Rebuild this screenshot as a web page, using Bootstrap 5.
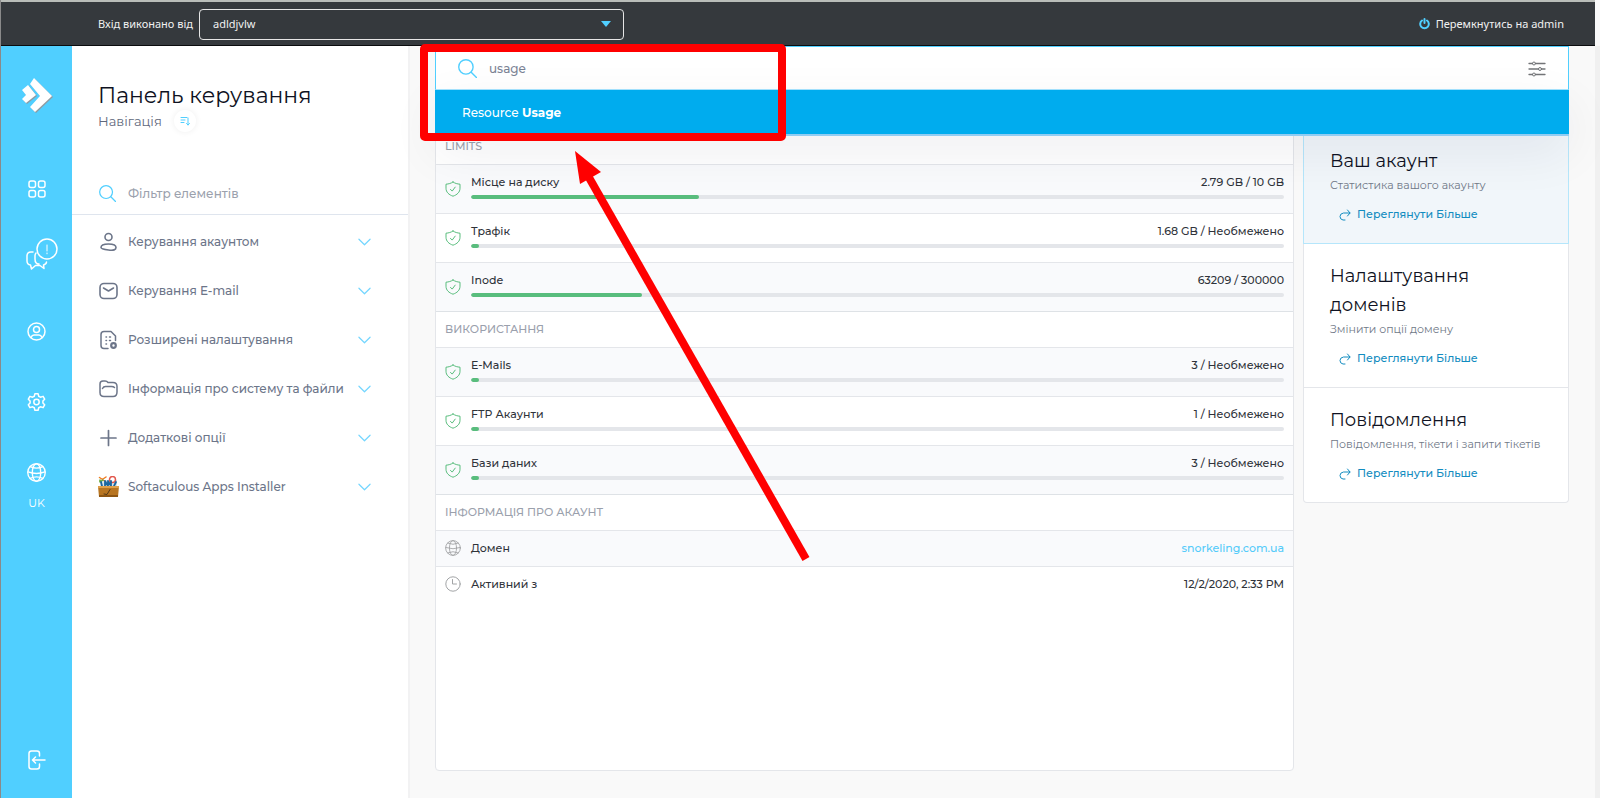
<!DOCTYPE html>
<html lang="uk">
<head>
<meta charset="utf-8">
<meta name="viewport" content="width=device-width, initial-scale=1">
<title>Панель керування</title>
<link href="https://cdn.jsdelivr.net/npm/bootstrap@5.3.0/dist/css/bootstrap.min.css" rel="stylesheet">
<style>
  :root { --sky: #50cfff; --slate: #6c7589; --ink: #0f1222; --line: #e4e6ea; }
  body { font-family: Montserrat, Inter, sans-serif; font-size: 11px; line-height: 18px; color: #2f333a; background: #f9f9f9; }
  svg { fill: none; stroke: currentColor; stroke-linecap: round; stroke-linejoin: round; flex: none; }
  svg.solid { stroke: none; }
  a { text-decoration: none; }
  .shell { border-left: 1px solid #8a8a8a; }
  .topbar { height: 46px; margin-right: 5px; padding: 1px 31px 0 97px; background: #35393d; border-top: 2px solid #b9bdb9; border-bottom: 1px solid #0b0c0e; color: #fff; font-family: "Noto Sans", sans-serif; }
  .topbar label, .topbar select, .topbar a { font-size: 11px; color: #f1f1f1; }
  .topbar label { margin-right: 6px; }
  .topbar a { gap: 6px; }
  .topbar a svg { color: var(--sky); }
  .user-pick { width: 425px; }
  .user-pick select { height: 31px; padding: 0 13px; background: #35393d; border: 1px solid #e6e6e6; border-radius: 4px; appearance: none; }
  .user-pick .caret { position: absolute; right: 13px; top: 12px; border: 5px solid transparent; border-top: 6px solid var(--sky); border-bottom: 0; pointer-events: none; }
  .rail { width: 71px; background: var(--sky); padding: 32px 0 28px; color: #fff; }
  .rail a { color: #fff; line-height: 18px; }
  .rail-links { margin-top: 61px; gap: 43px; }
  .rail-links a { height: 28px; }
  .side { width: 338px; background: #fff; border-right: 2px solid #f2f2f3; }
  .side-head { padding: 36px 26px 0; height: 121px; }
  .side-head h1 { font-size: 22px; line-height: 28px; color: var(--ink); }
  .side-head h2 { font-size: 13px; line-height: 22px; color: #5f687c; }
  .round-btn { width: 22px; height: 22px; border-radius: 50%; color: var(--sky); box-shadow: 0 0 6px rgba(0,0,0,.07); }
  .filter { height: 48px; padding: 6px 26px 0 27px; gap: 12px; border-bottom: 1px solid #dfe5ee; color: var(--sky); }
  .filter input, .search input { font-size: 12px; line-height: 22px; font-weight: 500; color: #7b8395; }
  .filter input::placeholder { color: #9ba1ad; }
  .menu { padding-top: 2px; }
  .menu button { height: 49px; padding: 0 37px 0 26px; gap: 9px; color: var(--slate); font-size: 12px; font-weight: 500; line-height: 18px; white-space: nowrap; }
  .menu .chev { color: #74d6ff; }
  .content-area { padding: 0 26px 27px 25px; }
  .gutter { width: 5px; background: #f0f0f0; }
  .search { height: 44px; padding: 1px 22px 0; background: #fff; border: 1px solid var(--sky); border-bottom-color: #a5e4ff; color: var(--sky); gap: 12px; }
  .search button svg { color: #737578; }
  .hits { position: absolute; left: 0; right: 0; top: 44px; z-index: 5; box-shadow: 0 16px 50px rgba(15,20,50,.07); border-bottom: 2px solid #91ccf2; }
  .hits a { display: block; padding: 14px 27px 12px; background: #00acee; color: #fff; font-size: 12px; font-weight: 500; }
  .panels { padding-top: 38px; gap: 9px; }
  .panel { background: #fff; border: 1px solid var(--line); border-radius: 0 0 4px 4px; overflow: hidden; }
  .panel h3 { height: 35px; padding: 8px 9px 0; color: #9aa0ac; font-size: 11px; line-height: 18px; font-weight: 500; }
  .stat { display: flex; gap: 10px; height: 49px; padding: 8px 9px 0; border-top: 1px solid var(--line); font-weight: 500; }
  .stat:nth-of-type(odd) { background: #f9fafc; }
  .stat > svg { margin-top: 8px; color: #59bd7d; }
  .stat.info { height: 36px; }
  .stat.info > svg { margin-top: 1px; color: #a2a4a6; }
  .stat.info a { color: #54cbfa; }
  .progress { height: 4px; margin-top: 4px; background: #e4e6ea; border-radius: 2px; }
  .progress-bar { background: #59bd7d; border-radius: 2px; min-width: 8px; }
  .tips { width: 266px; }
  .tip { padding: 18px 26px 20px; border: 1px solid var(--line); border-top: 0; background: #fff; }
  .tip.active { background: #f1f6fa; border-color: #b5e6fb; padding-top: 19px; }
  .tip:last-child { border-radius: 0 0 4px 4px; }
  .tip h3 { font-size: 18px; line-height: 29px; color: var(--ink); }
  .tip p { color: #6f7887; white-space: nowrap; }
  .tip a { margin: 11px 0 0 9px; gap: 6px; color: #128cc0; font-weight: 500; }
  .tip a svg { margin-top: 2px; }
  .marker { position: absolute; left: 419px; top: 42px; z-index: 10; pointer-events: none; }
</style>
</head>
<body>
<svg class="d-none" aria-hidden="true">
  <symbol id="shield" viewBox="0 0 16 16"><path d="M8 1C6 2.4 3.600 3 1 3.200v4C1 11.300 4 13.800 8 15.200c4-1.400 7-3.900 7-8v-4C12.400 3 10 2.400 8 1ZM5.500 8.400l1.700 1.700 3-4"/></symbol>
  <symbol id="lens" viewBox="0 0 18 18"><circle cx="7.500" cy="7.500" r="6.800"/><path d="m12.500 12.500 5 5"/></symbol>
  <symbol id="chev" viewBox="0 0 14 8"><path d="m1 1 6 6 6-6"/></symbol>
  <symbol id="globe" viewBox="0 0 18 18"><circle cx="9" cy="9" r="8.300"/><ellipse cx="9" cy="9" rx="4" ry="8.300"/><path d="M1 8.500q8 2.800 16 0M3 3.500q6 2.800 12 0M3 14.500q6-2.800 12 0"/></symbol>
  <symbol id="go" viewBox="0 0 12 12"><path d="M6 11H4Q1 10.500 1 7.500T4.500 4H11M8.500 1 11 4 8.500 7"/></symbol>
</svg>

<div class="shell d-flex flex-column min-vh-100 position-relative">
  <header class="topbar d-flex align-items-center">
    <label for="user">Вхід виконано від</label>
    <div class="user-pick position-relative">
      <select id="user" class="w-100"><option>adldjvlw</option></select>
      <span class="caret"></span>
    </div>
    <a href="#" class="ms-auto d-flex align-items-center">
      <svg width="11" height="12" viewBox="0 0 11 12" stroke-width="2"><path d="M3 2.500a4.300 4.300 0 1 0 5 0M5.500 1v4"/></svg>
      Перемкнутись на admin
    </a>
  </header>

  <div class="d-flex flex-grow-1">
    <nav class="rail d-flex flex-column align-items-center" aria-label="Головне меню">
      <a href="#" aria-label="Головна">
        <svg class="solid d-block" width="32" height="36" viewBox="0 0 32 36">
          <g fill="#8f9ca3" transform="translate(1 1)"><path d="m13 0 18 18-17 16-5-5 10-11L9 6Z"/><path d="m7 7 8 10-10 8-4-4 4-4-4-5Z"/></g>
          <g fill="#fff"><path d="m13 0 18 18-17 16-5-5 10-11L9 6Z"/><path d="m7 7 8 10-10 8-4-4 4-4-4-5Z"/></g>
        </svg>
      </a>
      <div class="rail-links d-flex flex-column align-items-center">
        <a href="#" class="d-flex align-items-center" aria-label="Віджети"><svg width="18" height="18" viewBox="0 0 18 18" stroke-width="1.500"><rect x="1" y="1" width="6.500" height="6.500" rx="2"/><rect x="10.500" y="1" width="6.500" height="6.500" rx="2"/><rect x="1" y="10.500" width="6.500" height="6.500" rx="2"/><rect x="10.500" y="10.500" width="6.500" height="6.500" rx="2"/></svg></a>
        <a href="#" class="d-flex align-items-end ps-2" aria-label="Повідомлення"><svg width="34" height="36" viewBox="-3 0 34 36" stroke-width="1.500"><path d="M6 14H4q-4 0-4 4v5q0 3.500 3.500 4l1 4 4-3.500M9 15q-1 1-1 3v3q0 5 4 5M8.500 27.500H13l4 3-.5-3.500q3-1 3-3"/><circle cx="20" cy="11" r="10"/><path d="M20 7v6M20 15v.8" stroke-width="1"/></svg></a>
        <a href="#" class="d-flex align-items-center" aria-label="Профіль"><svg width="19" height="19" viewBox="0 0 19 19" stroke-width="1.500"><circle cx="9.500" cy="9.500" r="8.500"/><circle cx="9.500" cy="7.500" r="3"/><path d="M4 15.500q1-2.500 3-2.500h5q2 0 3 2.500"/></svg></a>
        <a href="#" class="d-flex align-items-center" aria-label="Налаштування"><svg width="19" height="20" viewBox="0 0 24 24" stroke-width="1.900"><circle cx="12" cy="12" r="3.400"/><path d="M10 1.500h4l.8 3.200 2.200 1.200 3.300-1 2 3.500-2.200 2.300v2.600l2.200 2.300-2 3.500-3.300-1-2.200 1.200-.8 3.200h-4l-.8-3.200L7 18.100l-3.300 1-2-3.500 2.200-2.300v-2.600L1.700 8.400l2-3.500 3.300 1 2.200-1.200Z"/></svg></a>
        <a href="#" class="d-flex flex-column align-items-center pt-1" aria-label="Мова"><svg width="19" height="19" stroke-width="1.300"><use href="#globe"/></svg><span class="mt-2 pt-1">UK</span></a>
      </div>
      <a href="#" class="mt-auto" aria-label="Вийти"><svg class="d-block" width="18" height="20" viewBox="0 0 18 20" stroke-width="1.500"><path d="M11.500 6V3.500q0-2.500-2.500-2.500H3.500Q1 1 1 3.500v13Q1 19 3.500 19H9q2.500 0 2.500-2.500V14M17 10H5M7.500 7l-3 3 3 3"/></svg></a>
    </nav>

    <aside class="side">
      <div class="side-head">
        <h1 class="fw-normal mb-0">Панель керування</h1>
        <div class="d-flex align-items-center gap-2">
          <h2 class="fw-normal mb-0">Навігація</h2>
          <button class="round-btn btn p-0 border-0 ms-1 d-flex align-items-center justify-content-center" aria-label="Сортування"><svg width="10" height="10" viewBox="0 0 10 10"><path d="M1 1.500h6M1 4h4M1 6.500h3M8 2v7M6.500 7.500 8 9l1.500-1.500"/></svg></button>
        </div>
      </div>
      <div class="filter d-flex align-items-center">
        <svg width="17" height="17" stroke-width="1.300"><use href="#lens"/></svg>
        <input type="text" class="border-0 p-0 bg-transparent flex-grow-1" placeholder="Фільтр елементів" aria-label="Фільтр елементів">
      </div>
      <div class="menu">
        <button class="btn border-0 w-100 d-flex align-items-center text-start"><svg width="21" height="20" viewBox="0 0 21 20" stroke-width="1.600"><circle cx="10.500" cy="5" r="3.500"/><path d="M3 15.500q0-3.500 7.500-3.500t7.500 3.500T10.500 18 3 15.500Z"/></svg>Керування акаунтом<svg class="chev ms-auto" width="13" height="8" stroke-width="1.300"><use href="#chev"/></svg></button>
        <button class="btn border-0 w-100 d-flex align-items-center text-start"><svg width="21" height="20" viewBox="0 0 21 20" stroke-width="1.600"><rect x="2" y="2.500" width="17" height="15" rx="4"/><path d="m5.500 7 5 3 5-3"/></svg>Керування E-mail<svg class="chev ms-auto" width="13" height="8" stroke-width="1.300"><use href="#chev"/></svg></button>
        <button class="btn border-0 w-100 d-flex align-items-center text-start"><svg width="21" height="20" viewBox="0 0 21 20" stroke-width="1.500"><path d="M10 18.500H6q-3 0-3-3v-11q0-3 3-3h7L17.500 6v4.500M8 7h.5M8 10.500h.5M8 14h.5M11.500 7h1M11.500 10.500h1"/><circle cx="15.500" cy="15.500" r="2.300" stroke-width="2.200"/></svg>Розширені налаштування<svg class="chev ms-auto" width="13" height="8" stroke-width="1.300"><use href="#chev"/></svg></button>
        <button class="btn border-0 w-100 d-flex align-items-center text-start"><svg width="21" height="20" viewBox="0 0 21 20" stroke-width="1.500"><path d="M2 5q0-3 3-3h2q2 0 3 1.500h5q4 0 4 4V13q0 4.500-4 4.500H6q-4 0-4-4ZM4.500 9.500q1-2 3-2h6q2 0 3 1"/></svg>Інформація про систему та файли<svg class="chev ms-auto" width="13" height="8" stroke-width="1.300"><use href="#chev"/></svg></button>
        <button class="btn border-0 w-100 d-flex align-items-center text-start"><svg width="21" height="20" viewBox="0 0 21 20" stroke-width="1.700"><path d="M3 10h15M10.500 2.500v15"/></svg>Додаткові опції<svg class="chev ms-auto" width="13" height="8" stroke-width="1.300"><use href="#chev"/></svg></button>
        <button class="btn border-0 w-100 d-flex align-items-center text-start"><svg class="solid" width="21" height="21" viewBox="0 0 21 21"><path fill="#d9e6ee" d="M2 4h17v7H2Z"/><path d="m1.500 1.500 6 4M8 1 2 5" stroke="#ef7d22" stroke-width="1.500"/><path d="M2 4v2l3-2" stroke="#5cb147" stroke-width="1.500"/><circle cx="14.500" cy="3.500" r="3" stroke="#e2584d" stroke-width="1.500" fill="#fff"/><path d="M4 10 3 6M7 10V5l3 5V5l3 5V5M16 10l2-4" stroke="#1b669f" stroke-width="1.800"/><path fill="#b87521" d="M0 10h21l-1 11H1Z"/><path fill="#e0a04b" d="M0 10h21v2H0Z"/><path fill="#8f5612" d="M1 19h19v2H1Z"/><path d="m6 18 3 .5 3-5" stroke="#513718"/></svg>Softaculous Apps Installer<svg class="chev ms-auto" width="13" height="8" stroke-width="1.300"><use href="#chev"/></svg></button>
      </div>
    </aside>

    <main class="content-area flex-grow-1 d-flex flex-column">
      <div class="position-relative">
        <div class="search d-flex align-items-center">
          <svg width="19" height="19" stroke-width="1.300"><use href="#lens"/></svg>
          <input type="text" class="border-0 p-0 bg-transparent flex-grow-1" value="usage" aria-label="Пошук">
          <button class="btn border-0 p-0 d-flex" aria-label="Параметри"><svg width="18" height="16" viewBox="0 0 18 16"><path d="M1 2.500h3.500M7.500 2.500H17M1 8h9.500M13.500 8H17M1 13.500h3.500M7.500 13.500H17" stroke-width="1.300"/><circle cx="6" cy="2.500" r="1.500"/><circle cx="12" cy="8" r="1.500"/><circle cx="6" cy="13.500" r="1.500"/></svg></button>
        </div>
        <div class="hits"><a href="#">Resource <b>Usage</b></a></div>
      </div>

      <div class="panels d-flex flex-grow-1">
        <section class="panel flex-grow-1">
          <div>
            <h3 class="mb-0">LIMITS</h3>
            <section class="stat"><svg width="16" height="16"><use href="#shield"/></svg><div class="flex-grow-1"><div class="d-flex justify-content-between"><span>Місце на диску</span><span>2.79 GB / 10 GB</span></div><div class="progress"><div class="progress-bar" style="width:28%"></div></div></div></section>
            <section class="stat"><svg width="16" height="16"><use href="#shield"/></svg><div class="flex-grow-1"><div class="d-flex justify-content-between"><span>Трафік</span><span>1.68 GB / Необмежено</span></div><div class="progress"><div class="progress-bar" style="width:1%"></div></div></div></section>
            <section class="stat"><svg width="16" height="16"><use href="#shield"/></svg><div class="flex-grow-1"><div class="d-flex justify-content-between"><span>Inode</span><span>63209 / 300000</span></div><div class="progress"><div class="progress-bar" style="width:21%"></div></div></div></section>
          </div>
          <div class="border-top">
            <h3 class="mb-0">ВИКОРИСТАННЯ</h3>
            <section class="stat"><svg width="16" height="16"><use href="#shield"/></svg><div class="flex-grow-1"><div class="d-flex justify-content-between"><span>E-Mails</span><span>3 / Необмежено</span></div><div class="progress"><div class="progress-bar" style="width:1%"></div></div></div></section>
            <section class="stat"><svg width="16" height="16"><use href="#shield"/></svg><div class="flex-grow-1"><div class="d-flex justify-content-between"><span>FTP Акаунти</span><span>1 / Необмежено</span></div><div class="progress"><div class="progress-bar" style="width:1%"></div></div></div></section>
            <section class="stat"><svg width="16" height="16"><use href="#shield"/></svg><div class="flex-grow-1"><div class="d-flex justify-content-between"><span>Бази даних</span><span>3 / Необмежено</span></div><div class="progress"><div class="progress-bar" style="width:1%"></div></div></div></section>
          </div>
          <div class="border-top">
            <h3 class="mb-0">ІНФОРМАЦІЯ ПРО АКАУНТ</h3>
            <section class="stat info"><svg width="16" height="16"><use href="#globe"/></svg><span class="me-auto">Домен</span><a href="#">snorkeling.com.ua</a></section>
            <section class="stat info"><svg width="16" height="16" viewBox="0 0 16 16"><circle cx="8" cy="8" r="7.200"/><path d="M7.500 3.500V8h4"/></svg><span class="me-auto">Активний з</span><span>12/2/2020, 2:33 PM</span></section>
          </div>
        </section>

        <section class="tips flex-shrink-0">
          <article class="tip active">
            <h3 class="fw-normal mb-0">Ваш акаунт</h3>
            <p class="mb-0">Статистика вашого акаунту</p>
            <a href="#" class="d-flex align-items-center"><svg width="12" height="12"><use href="#go"/></svg>Переглянути Більше</a>
          </article>
          <article class="tip">
            <h3 class="fw-normal mb-0">Налаштування доменів</h3>
            <p class="mb-0">Змінити опції домену</p>
            <a href="#" class="d-flex align-items-center"><svg width="12" height="12"><use href="#go"/></svg>Переглянути Більше</a>
          </article>
          <article class="tip">
            <h3 class="fw-normal mb-0">Повідомлення</h3>
            <p class="mb-0">Повідомлення, тікети і запити тікетів</p>
            <a href="#" class="d-flex align-items-center"><svg width="12" height="12"><use href="#go"/></svg>Переглянути Більше</a>
          </article>
        </section>
      </div>
    </main>
    <div class="gutter"></div>
  </div>

  <!-- Callout frame and arrow pointing at the search result -->
  <svg class="marker" width="390" height="522" viewBox="0 0 390 522" aria-hidden="true">
    <rect x="4" y="6" width="358" height="89" rx="1" stroke="#f00" stroke-width="8"/>
    <path d="m386 517-219-385" stroke="#f00" stroke-width="8" stroke-linecap="butt"/>
    <path d="m155 109 26 21-21 12Z" fill="#f00" stroke="none"/>
  </svg>
</div>
<script src="https://cdn.jsdelivr.net/npm/bootstrap@5.3.0/dist/js/bootstrap.bundle.min.js"></script>
</body>
</html>
